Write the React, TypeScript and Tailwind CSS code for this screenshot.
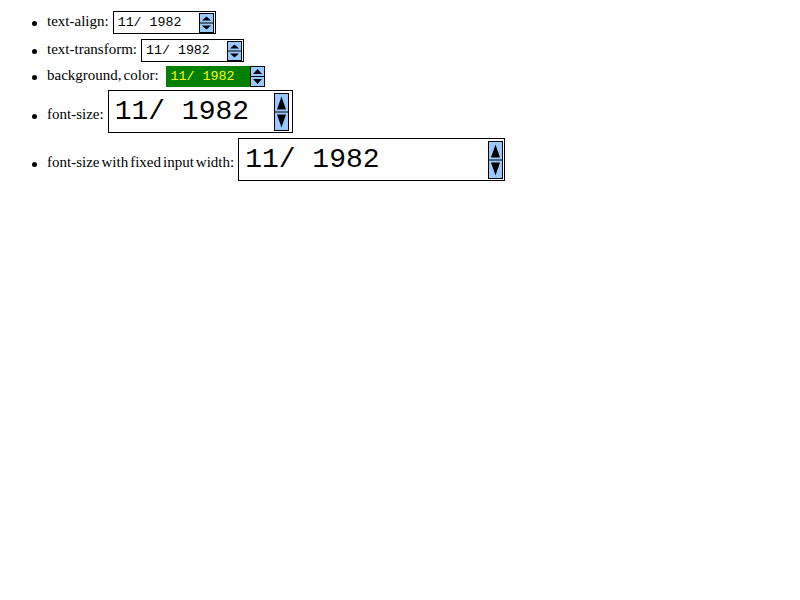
const Spinner = ({ h }: { h: number }) => {
  const half = h / 2;
  const tri = Math.max(3, Math.round(half - 6));
  return (
    <svg width={15} height={h} viewBox={`0 0 15 ${h}`} className="block shrink-0">
      <rect x={0.5} y={0.5} width={14} height={h - 1} fill="#99c9ff" stroke="#000" />
      <line x1={0} y1={half} x2={15} y2={half} stroke="#000" />
      <polygon points={`3,${half - 2.5} 12,${half - 2.5} 7.5,${half - 2.5 - tri}`} fill="#000" />
      <polygon points={`3,${half + 2.5} 12,${half + 2.5} 7.5,${half + 2.5 + tri}`} fill="#000" />
    </svg>
  );
};

const Bullet = () => (
  <span className="inline-block w-[5px] h-[5px] rounded-full bg-black mb-[4px] mr-[10px] shrink-0" />
);

const Label = ({ children }: { children: string }) => (
  <span className="mr-[4px] [word-spacing:-1.75px]">{children}</span>
);

const mono = { fontFamily: '"Liberation Mono", "DejaVu Sans Mono", monospace' };

export default function App() {
  return (
    <div className="w-[800px] h-[600px] bg-white text-black font-['Liberation_Serif',serif] text-[15px] leading-[normal]">
      <ul className="pt-[11px] pl-[32px]">
        <li className="flex items-baseline">
          <Bullet />
          <Label>text-align:</Label>
          <span className="inline-flex items-center justify-between w-[103px] h-[23px] border border-black pl-[4px] pr-px">
            <span style={mono} className="text-[13.3px]">11/ 1982</span>
            <Spinner h={20} />
          </span>
        </li>
        <li className="flex items-baseline mt-[5px]">
          <Bullet />
          <Label>text-transform:</Label>
          <span className="inline-flex items-center justify-between w-[103px] h-[23px] border border-black pl-[4px] pr-px">
            <span style={mono} className="text-[13.3px]">11/ 1982</span>
            <Spinner h={20} />
          </span>
        </li>
        <li className="flex items-baseline mt-[4px]">
          <Bullet />
          <Label>background, color:</Label>
          <span className="inline-flex items-center justify-between w-[99px] h-[21px] ml-[3px] bg-[#008000] text-[#ffff00] pl-[5px]">
            <span style={mono} className="text-[13.3px]">11/ 1982</span>
            <Spinner h={21} />
          </span>
        </li>
        <li className="flex items-baseline mt-[3px]">
          <Bullet />
          <Label>font-size:</Label>
          <span className="inline-flex items-center justify-between w-[185px] h-[43px] border border-black pl-[6px] pr-[3px]">
            <span style={mono} className="text-[28px] leading-[32px]">11/ 1982</span>
            <Spinner h={38} />
          </span>
        </li>
        <li className="flex items-baseline mt-[5px]">
          <Bullet />
          <Label>font-size with fixed input width:</Label>
          <span className="inline-flex items-center justify-between w-[267px] h-[43px] border border-black pl-[6px] pr-px">
            <span style={mono} className="text-[28px] leading-[32px]">11/ 1982</span>
            <Spinner h={38} />
          </span>
        </li>
      </ul>
    </div>
  );
}
